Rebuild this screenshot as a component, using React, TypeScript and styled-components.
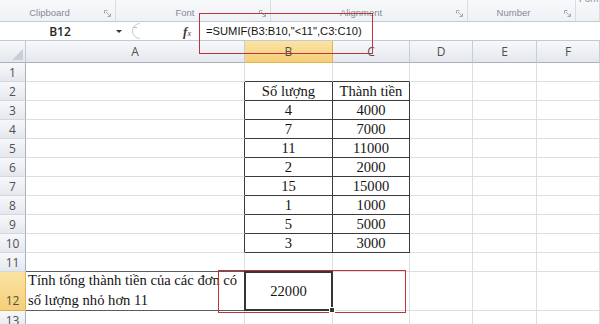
import React from "react";
import styled, { createGlobalStyle, css } from "styled-components";

const GlobalStyle = createGlobalStyle`
  html, body { margin: 0; padding: 0; background: #fff; }
  body { overflow: hidden; }
`;

const Root = styled.div`
  position: relative;
  width: 600px;
  height: 324px;
  overflow: hidden;
  background: #fff;
  display: flex;
  flex-direction: column;
`;

/* ---------- Ribbon ---------- */
const Ribbon = styled.div`
  display: flex;
  height: 22px;
  box-sizing: border-box;
  background: linear-gradient(#f8f9fb, #eef1f5);
  border-bottom: 1px solid #c4cad2;
  flex-shrink: 0;
`;

const Group = styled.div<{ $w: number; $top?: boolean }>`
  width: ${(p) => p.$w}px;
  flex-shrink: 0;
  box-sizing: border-box;
  border-right: 1px solid #d8dde3;
  display: flex;
  align-items: ${(p) => (p.$top ? "flex-start" : "flex-end")};
  padding-bottom: 2px;
  overflow: hidden;
`;

const GroupLabel = styled.div<{ $top?: boolean }>`
  flex: 1;
  text-align: ${(p) => (p.$top ? "left" : "center")};
  font-family: "Liberation Sans", Arial, sans-serif;
  font-size: 9.5px;
  line-height: 12px;
  color: #868c95;
  white-space: nowrap;
  ${(p) =>
    p.$top &&
    css`
      margin-top: -7px;
      padding-left: 3px;
    `}
`;

const Launcher = styled.div`
  width: 16px;
  height: 12px;
  display: flex;
  align-items: center;
  justify-content: center;
`;

const LauncherIcon = () => (
  <svg width="7" height="7" viewBox="0 0 7 7" fill="none" stroke="#a4aab2" strokeWidth="1">
    <path d="M0.5 3.5V0.5H3.5" />
    <path d="M2 2L6 6" />
    <path d="M6.5 3.5V6.5H3.5" />
  </svg>
);

/* ---------- Formula bar ---------- */
const FormulaBar = styled.div`
  display: flex;
  align-items: center;
  height: 19px;
  box-sizing: border-box;
  border-bottom: 1px solid #c4cad2;
  background: #fff;
  flex-shrink: 0;
`;

const NameBox = styled.div`
  width: 114px;
  box-sizing: border-box;
  padding-left: 6px;
  text-align: center;
  font-family: "Open Sans", "Liberation Sans", sans-serif;
  font-size: 12px;
  font-weight: 600;
  color: #262626;
`;

const DropArrow = styled.div`
  width: 10px;
  display: flex;
  justify-content: center;
  &::before {
    content: "";
    border-left: 3px solid transparent;
    border-right: 3px solid transparent;
    border-top: 3px solid #333;
  }
`;

const Knob = styled.div`
  margin-left: 3px;
  width: 14px;
  height: 18px;
  display: flex;
  align-items: center;
`;

const FxBox = styled.div`
  width: 59px;
  box-sizing: border-box;
  padding-right: 9px;
  text-align: right;
  font-family: "Liberation Serif", "Times New Roman", serif;
  color: #3a3a3a;
  i {
    font-size: 13px;
    font-weight: bold;
  }
  sub {
    font-size: 8px;
    font-style: italic;
    vertical-align: baseline;
  }
`;

const FormulaText = styled.div`
  flex: 1;
  padding-left: 6px;
  font-family: "Liberation Sans", Arial, sans-serif;
  font-size: 11.2px;
  color: #141414;
  white-space: nowrap;
`;

/* ---------- Grid ---------- */
const Sheet = styled.div`
  display: grid;
  grid-template-columns: 26px 219px 88px 77px 63px 64px 1fr;
  grid-template-rows: 22px repeat(11, 19px) 39px 19px;
`;

const headBg = css<{ $active?: boolean }>`
  background: ${(p) =>
    p.$active
      ? "linear-gradient(#fbe3a4, #f5cf78)"
      : "linear-gradient(#f7f8fa, #e4e8ee)"};
  font-family: "Open Sans", "Liberation Sans", sans-serif;
  font-size: 12px;
  color: #505050;
  box-sizing: border-box;
`;

const Corner = styled.div`
  ${headBg};
  position: relative;
  border-right: 1px solid #c3c9d1;
  border-bottom: 1px solid #a9b1bc;
  &::after {
    content: "";
    position: absolute;
    right: 2px;
    bottom: 2px;
    border-left: 11px solid transparent;
    border-bottom: 11px solid #c9ced5;
  }
`;

const ColHead = styled.div<{ $active?: boolean }>`
  ${headBg};
  display: flex;
  align-items: center;
  justify-content: center;
  border-right: 1px solid ${(p) => (p.$active ? "#e2b24f" : "#c8ced6")};
  border-bottom: 1px solid ${(p) => (p.$active ? "#e2b24f" : "#a9b1bc")};
`;

const RowHead = styled.div<{ $active?: boolean; $tall?: boolean }>`
  ${headBg};
  display: flex;
  align-items: ${(p) => (p.$tall ? "flex-end" : "center")};
  justify-content: center;
  padding-bottom: ${(p) => (p.$tall ? "1px" : "0")};
  border-right: 1px solid ${(p) => (p.$active ? "#e2b24f" : "#a9b1bc")};
  border-bottom: 1px solid ${(p) => (p.$active ? "#e2b24f" : "#d3d8de")};
`;

const Cell = styled.div<{
  $right: string;
  $bottom: string;
  $align?: "left" | "center";
  $valign?: "center" | "end";
}>`
  box-sizing: border-box;
  border-right: 1px solid ${(p) => p.$right};
  border-bottom: 1px solid ${(p) => p.$bottom};
  display: flex;
  align-items: ${(p) => (p.$valign === "end" ? "flex-end" : "center")};
  justify-content: ${(p) => (p.$align === "left" ? "flex-start" : "center")};
  padding: ${(p) => (p.$align === "left" ? "0 0 0 2px" : "0")};
  font-family: "Liberation Serif", "Times New Roman", "DejaVu Serif", serif;
  font-size: 14.6px;
  color: #141414;
  white-space: nowrap;
`;

const WrapText = styled.div`
  line-height: 19.5px;
`;

const ActiveCell = styled(Cell)`
  position: relative;
  &::before {
    content: "";
    position: absolute;
    top: -1px;
    left: -1px;
    right: -1px;
    bottom: -1px;
    border: 2px solid #353535;
    z-index: 1;
    pointer-events: none;
  }
  &::after {
    content: "";
    position: absolute;
    right: -3px;
    bottom: -3px;
    width: 4px;
    height: 4px;
    background: #353535;
    border: 1px solid #fff;
    z-index: 2;
  }
`;

const RedBox = styled.div<{ $x: number; $y: number; $w: number; $h: number }>`
  position: absolute;
  left: ${(p) => p.$x}px;
  top: ${(p) => p.$y}px;
  width: ${(p) => p.$w}px;
  height: ${(p) => p.$h}px;
  box-sizing: border-box;
  border: 1px solid #bd343b;
  pointer-events: none;
`;

/* ---------- Data ---------- */
const COLS = ["A", "B", "C", "D", "E", "F"];
const ROWS = 13;
const GRID = "#dcdedf";
const DARK = "#3c3c3c";
const MID = "#5c5c5c";

const values: Record<string, React.ReactNode> = {
  "2-1": "Số lượng",
  "2-2": "Thành tiền",
};
[
  [4, 4000],
  [7, 7000],
  [11, 11000],
  [2, 2000],
  [15, 15000],
  [1, 1000],
  [5, 5000],
  [3, 3000],
].forEach(([q, t], i) => {
  values[`${i + 3}-1`] = String(q);
  values[`${i + 3}-2`] = String(t);
});
values["12-1"] = "22000";

const inTable = (r: number, c: number) => r >= 2 && r <= 10 && (c === 1 || c === 2);

const rightColor = (r: number, c: number) =>
  inTable(r, c) || inTable(r, c + 1) ? DARK : GRID;

const bottomColor = (r: number, c: number) => {
  if (inTable(r, c) || inTable(r + 1, c)) return DARK;
  if (c === 0 && (r === 11 || r === 12)) return MID;
  return GRID;
};

export default function App() {
  const cells: React.ReactNode[] = [];
  cells.push(<Corner key="corner" />);
  COLS.forEach((l, c) =>
    cells.push(
      <ColHead key={`h${l}`} $active={c === 1}>
        {l}
      </ColHead>
    )
  );
  for (let r = 1; r <= ROWS; r++) {
    cells.push(
      <RowHead key={`r${r}`} $active={r === 12} $tall={r === 12}>
        {r}
      </RowHead>
    );
    for (let c = 0; c < COLS.length; c++) {
      const key = `${r}-${c}`;
      const common = { $right: rightColor(r, c), $bottom: bottomColor(r, c) };
      if (r === 12 && c === 0) {
        cells.push(
          <Cell key={key} {...common} $align="left" $valign="end">
            <WrapText>
              Tính tổng thành tiền của các đơn có
              <br />
              số lượng nhỏ hơn 11
            </WrapText>
          </Cell>
        );
      } else if (r === 12 && c === 1) {
        cells.push(
          <ActiveCell key={key} {...common}>
            {values[key]}
          </ActiveCell>
        );
      } else {
        cells.push(
          <Cell key={key} {...common}>
            {values[key] ?? ""}
          </Cell>
        );
      }
    }
  }

  return (
    <>
      <GlobalStyle />
      <Root>
        <Ribbon>
          <Group $w={116}>
            <GroupLabel>Clipboard</GroupLabel>
            <Launcher>
              <LauncherIcon />
            </Launcher>
          </Group>
          <Group $w={155}>
            <GroupLabel>Font</GroupLabel>
            <Launcher>
              <LauncherIcon />
            </Launcher>
          </Group>
          <Group $w={197}>
            <GroupLabel>Alignment</GroupLabel>
            <Launcher>
              <LauncherIcon />
            </Launcher>
          </Group>
          <Group $w={108}>
            <GroupLabel>Number</GroupLabel>
            <Launcher>
              <LauncherIcon />
            </Launcher>
          </Group>
          <Group $w={24} $top>
            <GroupLabel $top>Format</GroupLabel>
          </Group>
        </Ribbon>
        <FormulaBar>
          <NameBox>B12</NameBox>
          <DropArrow />
          <Knob>
            <svg width="14" height="18" viewBox="0 0 14 18" fill="none">
              <path d="M13 1.5A7.5 7.5 0 0 0 13 16.5" stroke="#c6cad0" strokeWidth="1" />
              <path d="M7 5.5H10" stroke="#b3b8bf" strokeWidth="1" />
            </svg>
          </Knob>
          <FxBox>
            <i>f</i>
            <sub>x</sub>
          </FxBox>
          <FormulaText>=SUMIF(B3:B10,"&lt;11",C3:C10)</FormulaText>
        </FormulaBar>
        <Sheet>{cells}</Sheet>
        <RedBox $x={199} $y={13} $w={174} $h={41} />
        <RedBox $x={218} $y={270} $w={188} $h={43} />
      </Root>
    </>
  );
}
